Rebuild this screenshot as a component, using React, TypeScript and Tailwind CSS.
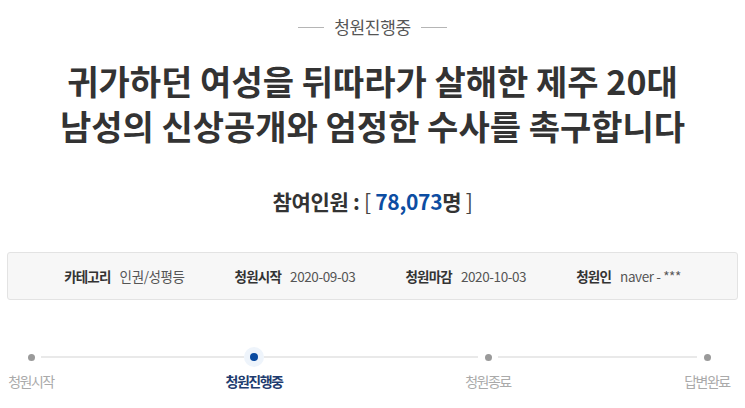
const font = {
  fontFamily: '"Noto Sans CJK KR", "Noto Sans", sans-serif',
}

const info = [
  { label: '카테고리', value: '인권/성평등' },
  { label: '청원시작', value: '2020-09-03' },
  { label: '청원마감', value: '2020-10-03' },
  { label: '청원인', value: 'naver - ***' },
]

const steps = [
  { label: '청원시작', active: false },
  { label: '청원진행중', active: true },
  { label: '청원종료', active: false },
  { label: '답변완료', active: false },
]

// widths of the track between neighbouring steps
const connectors = ['w-[161px]', 'w-[172px]', 'w-[157px]']

export default function App() {
  return (
    <div className="h-[408px] w-[745px] overflow-hidden bg-white" style={font}>
      {/* status badge */}
      <div className="flex items-center justify-center gap-[10px] pt-[14px]">
        <span className="h-px w-[26px] bg-[#b5b5b5]" />
        <span className="text-[17px] leading-[26px] tracking-[-0.3px] text-[#555]">
          청원진행중
        </span>
        <span className="h-px w-[26px] bg-[#b5b5b5]" />
      </div>

      {/* title */}
      <h1 className="mt-[18px] text-center text-[34px] font-bold leading-[45px] text-[#333]">
        귀가하던 여성을 뒤따라가 살해한 제주 20대
        <br />
        남성의 신상공개와 엄정한 수사를 촉구합니다
      </h1>

      {/* participants */}
      <p className="mt-[38px] text-center text-[21px] font-bold leading-[30px] tracking-[-0.3px] text-[#333]">
        참여인원 : <span className="font-normal text-[#444]">[</span>{' '}
        <span className="text-[#0c4da2]">78,073</span>명{' '}
        <span className="font-normal text-[#444]">]</span>
      </p>

      {/* info box */}
      <div className="mx-[7px] mt-[36px] flex h-[48px] items-center justify-center gap-[50px] rounded-[3px] border border-[#e3e3e3] bg-[#f7f7f7]">
        {info.map((item) => (
          <div key={item.label} className="flex items-center gap-[9px] text-[13.5px] leading-[20px]">
            <span className="font-bold tracking-[-0.8px] text-[#333]">{item.label}</span>
            <span className="tracking-[-0.4px] text-[#555]">{item.value}</span>
          </div>
        ))}
      </div>

      {/* progress */}
      <div className="mt-[47px] flex pr-[7px]">
        {steps.map((step, i) => (
          <div key={step.label} className="flex">
            {i > 0 && (
              <div className={`flex h-[20px] items-center ${connectors[i - 1]}`}>
                <span className="h-[2px] w-full bg-[#e9e9e9]" />
              </div>
            )}
            <div className="flex w-[62px] flex-col">
              <div className="flex h-[20px] items-center justify-center">
                <span
                  className={`h-[2px] flex-1 ${i === 0 ? 'bg-transparent' : 'bg-[#e9e9e9]'}`}
                />
                {step.active ? (
                  <span className="flex h-[20px] w-[20px] items-center justify-center rounded-full bg-[#eef4fb]">
                    <span className="h-[8px] w-[8px] rounded-full bg-[#0a4aa0]" />
                  </span>
                ) : (
                  <span className="mx-[6.5px] h-[7px] w-[7px] rounded-full bg-[#9a9a9a]" />
                )}
                <span
                  className={`h-[2px] flex-1 ${i === 3 ? 'bg-transparent' : 'bg-[#e9e9e9]'}`}
                />
              </div>
              <span
                className={`mt-[4px] whitespace-nowrap text-center text-[14px] leading-[20px] tracking-[-1.5px] ${
                  step.active ? 'font-bold text-[#1e3b6e]' : 'text-[#aaa]'
                }`}
              >
                {step.label}
              </span>
            </div>
          </div>
        ))}
      </div>
    </div>
  )
}
